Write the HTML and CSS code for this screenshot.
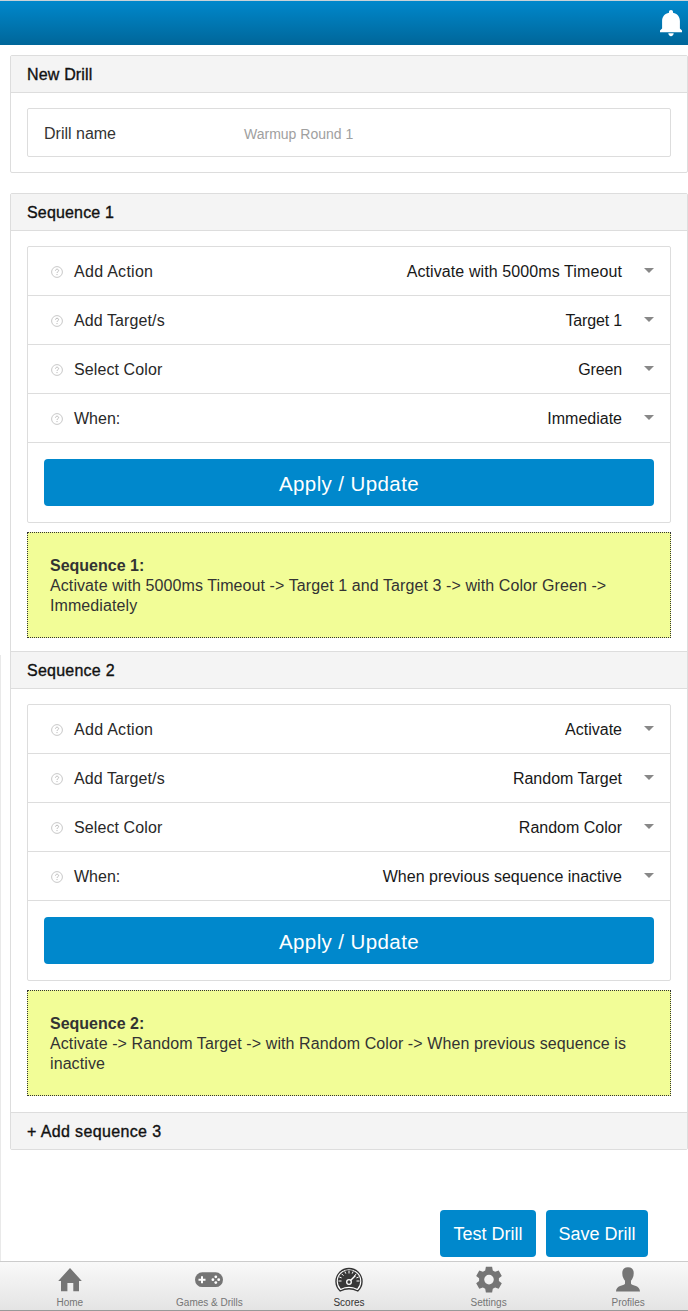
FILE: index.html
```html
<!DOCTYPE html>
<html lang="en">
<head>
<meta charset="utf-8">
<title>New Drill</title>
<link rel="stylesheet" href="styles.css">
</head>
<body>
<svg class="defs" width="0" height="0">
  <symbol id="help" viewBox="0 0 12 12"><circle cx="6" cy="6" r="5.4" fill="none" stroke="#c8c8c8"/><path d="M4.500 4.700c0-2 3.100-2 3.100 0C7.600 5.800 6 5.700 6 7M6 8v1.100" fill="none" stroke="#bdbdbd" stroke-width="1"/></symbol>
</svg>
<header class="topbar">
  <svg class="bell" viewBox="0 0 22 27"><path d="M11 0c1.300 0 2 .8 2 2v.7c4.200.8 6.900 3.900 6.900 8.200v7.500l2.100 2.200v1.600H0v-1.600l2.100-2.200v-7.500C2.100 6.600 4.800 3.500 9 2.700V2c0-1.200.7-2 2-2zM8.300 23.300h5.400c-.2 1.700-1.200 2.900-2.700 2.900s-2.500-1.200-2.700-2.900z" fill="#fff"/></svg>
</header>
<main class="content">
  <section class="panel">
    <h2 class="heading">New Drill</h2>
    <div class="body">
      <div class="field"><label class="field-label">Drill name</label><span class="placeholder">Warmup Round 1</span></div>
    </div>
  </section>
  <section class="panel">
    <h2 class="heading">Sequence 1</h2>
    <div class="body first">
      <div class="form">
        <div class="row"><svg class="help"><use href="#help"/></svg><span class="loose">Add Action</span><span class="value spaced">Activate with 5000ms Timeout</span><i class="caret"></i></div>
        <div class="row"><svg class="help"><use href="#help"/></svg><span class="spaced">Add Target/s</span><span class="value tight">Target 1</span><i class="caret"></i></div>
        <div class="row"><svg class="help"><use href="#help"/></svg><span class="spaced">Select Color</span><span class="value tight">Green</span><i class="caret"></i></div>
        <div class="row"><svg class="help"><use href="#help"/></svg><span>When:</span><span class="value">Immediate</span><i class="caret"></i></div>
        <div class="apply"><button class="btn wide">Apply / Update</button></div>
      </div>
      <div class="note"><b>Sequence 1:</b><br>Activate with 5000ms Timeout -&gt; Target 1 and Target 3 -&gt; with Color Green -&gt;<br>Immediately</div>
    </div>
    <h2 class="heading inner">Sequence 2</h2>
    <div class="body second">
      <div class="form">
        <div class="row"><svg class="help"><use href="#help"/></svg><span class="loose">Add Action</span><span class="value">Activate</span><i class="caret"></i></div>
        <div class="row"><svg class="help"><use href="#help"/></svg><span class="spaced">Add Target/s</span><span class="value">Random Target</span><i class="caret"></i></div>
        <div class="row"><svg class="help"><use href="#help"/></svg><span class="spaced">Select Color</span><span class="value">Random Color</span><i class="caret"></i></div>
        <div class="row"><svg class="help"><use href="#help"/></svg><span>When:</span><span class="value">When previous sequence inactive</span><i class="caret"></i></div>
        <div class="apply"><button class="btn wide">Apply / Update</button></div>
      </div>
      <div class="note"><b>Sequence 2:</b><br>Activate -&gt; Random Target -&gt; with Random Color -&gt; When previous sequence is<br>inactive</div>
    </div>
    <h2 class="heading last">+ Add sequence 3</h2>
  </section>
</main>
<div class="actions"><button class="btn test">Test Drill</button><button class="btn save">Save Drill</button></div>
<nav class="tabs">
  <a class="tab"><svg viewBox="0 0 28 28"><path d="M14 2 25.800 15H23v10.300h-5.700V17h-5.900v8.300H5V15H2.200z" fill="#757575"/></svg><span>Home</span></a>
  <a class="tab"><svg viewBox="0 0 28 28"><rect x="0" y="6.300" width="28" height="14.800" rx="7.400" fill="#757575"/><path d="M7 10.200v7M3.500 13.700h7" stroke="#fff" stroke-width="2"/><g fill="#fff"><circle cx="20.800" cy="10.800" r="1.400"/><circle cx="20.800" cy="16.600" r="1.400"/><circle cx="17.900" cy="13.700" r="1.400"/><circle cx="23.700" cy="13.700" r="1.400"/></g></svg><span>Games &amp; Drills</span></a>
  <a class="tab active"><svg viewBox="0 0 28 28"><path d="M5.200 25A13 13 0 1 1 22.800 25Q14 20.500 5.200 25z" fill="#fff" stroke="#333" stroke-width="1.400"/><path d="M5.800 22.800A11.200 11.200 0 1 1 22.200 22.800Q14 18.500 5.800 22.800z" fill="#383838"/><path d="M14 4.500v3M3.500 15h3M24.500 15h-3M6.500 7.700l2 2M21.500 7.700l-2 2M9.800 5.400l1 2.200M18.200 5.400l-1 2.200M4.300 11l2.300.9M23.700 11l-2.300.9" stroke="#fff" stroke-width="1"/><path d="m14 16 6.500-6.500" stroke="#fff" stroke-width="1.500"/><circle cx="14" cy="16" r="2.300" fill="#383838" stroke="#fff" stroke-width="1.300"/></svg><span>Scores</span></a>
  <a class="tab"><svg viewBox="0 0 28 28"><path fill-rule="evenodd" fill="#757575" d="M10.900.8h6.200l.7 3.700 2.300 1.300 3.600-1.300 3.100 5.400-2.900 2.400v2.600l2.900 2.400-3.100 5.400-3.600-1.300-2.300 1.300-.7 3.700h-6.200l-.7-3.700-2.300-1.300-3.600 1.300-3.100-5.400 2.900-2.400v-2.600L1.200 9.900l3.100-5.400 3.600 1.300 2.300-1.300zM14 8.800a4.800 4.800 0 1 0 0 9.600 4.800 4.800 0 0 0 0-9.600z"/></svg><span>Settings</span></a>
  <a class="tab"><svg viewBox="0 0 28 28"><path fill="#757575" d="M14 1.200c3.900 0 5.900 2.400 5.700 6.200 0 3.700-1.500 5.500-2.700 7.300v3.100c1.200 1.900 9 1.600 9 7.800H2c0-6.200 7.800-5.900 9-7.800v-3.100c-1.200-1.800-2.700-3.600-2.700-7.300C8.100 3.600 10.100 1.200 14 1.200z"/></svg><span>Profiles</span></a>
</nav>
</body>
</html>
```
FILE: styles.css
```css
* { box-sizing: border-box; }
body {
  margin: 0;
  height: 1311px;
  display: flex;
  flex-direction: column;
  font: 16px/20px "Liberation Sans", Arial, sans-serif;
  color: #282828;
  background: linear-gradient(#e9e9e9, #e9e9e9) 0 655px / 1px 100% no-repeat #fff;
  overflow: hidden;
}
.defs { position: absolute; }
.topbar {
  flex: none;
  height: 45px;
  padding: 9px 6px 0 0;
  border-top: 1px solid #c8d2d8;
  background: linear-gradient(#0088cc, #006699);
  display: flex;
  justify-content: flex-end;
  align-items: flex-start;
}
.bell { width: 22px; height: 27px; }
.content {
  padding: 10px 0 0 10px;
  display: flex;
  flex-direction: column;
  gap: 20px;
}
.panel {
  border: 1px solid #ddd;
  border-radius: 2px;
}
.heading {
  margin: 0;
  height: 37px;
  padding: 0 16px;
  border-bottom: 1px solid #ddd;
  background: #f4f4f4;
  color: #111;
  font-size: 16px;
  line-height: 37px;
  font-weight: 400;
  letter-spacing: 0.17px;
  -webkit-text-stroke: 0.35px #111;
}
.heading.inner { height: 38px; border-top: 1px solid #ddd; letter-spacing: 0.24px; }
.heading.last { height: 37px; border-top: 1px solid #ddd; border-bottom: 0; letter-spacing: 0.37px; }
.body { padding: 15px 16px; }
.body.first { padding-bottom: 13px; }
.body.second { padding-bottom: 16px; }
.field {
  height: 49px;
  border: 1px solid #ddd;
  border-radius: 2px;
  padding: 2px 16px 0;
  display: flex;
  align-items: center;
  color: #333;
}
.field-label { width: 200px; }
.placeholder { font-size: 14px; color: #a0a0a0; }
.form { border: 1px solid #ddd; border-radius: 2px; }
.row {
  height: 49px;
  padding: 1px 16px 0 23px;
  border-bottom: 1px solid #ddd;
  display: flex;
  align-items: center;
}
.help { width: 12px; height: 12px; margin-right: 11px; }
.value { margin-left: auto; color: #181818; }
.spaced { letter-spacing: 0.1px; }
.loose { letter-spacing: 0.28px; }
.tight { letter-spacing: -0.15px; }
.caret {
  margin: -2px 0 0 22px;
  border: 5px solid transparent;
  border-top-color: #888;
  border-bottom: 0;
}
.apply { padding: 16px; height: 79px; }
.btn {
  display: block;
  height: 47px;
  padding: 2px 0 0;
  border: 0;
  border-radius: 4px;
  background: #0088cc;
  color: #fff;
  font: 20px/24px "Liberation Sans", Arial, sans-serif;
}
.btn.wide { width: 100%; font-size: 20.5px; letter-spacing: 0.4px; }
.note {
  height: 106px;
  margin-top: 9px;
  padding: 23px 22px;
  border: 1px dotted #333;
  background: #f2fd97;
  color: #333;
  white-space: nowrap;
  letter-spacing: 0.09px;
}
.note b { letter-spacing: 0; }
.actions {
  flex: none;
  display: flex;
  justify-content: flex-end;
  gap: 10px;
  margin-top: auto;
  padding: 0 40px 4px 0;
}
.actions .btn { font-size: 18px; padding-top: 1px; }
.test { width: 96px; }
.save { width: 102px; }
.tabs {
  flex: none;
  height: 50px;
  border-top: 1px solid #ccc;
  border-bottom: 1px solid #999;
  background: linear-gradient(#f9f9f9, #e4e4e4);
  display: grid;
  grid-template-columns: repeat(5, 1fr);
  width: 698px;
}
.tab {
  display: flex;
  flex-direction: column;
  align-items: center;
  padding-top: 4px;
  font-size: 10px;
  line-height: 12px;
  color: #757575;
}
.tab svg { width: 28px; height: 28px; }
.tab span { margin-top: 3px; }
.tab.active { color: #333; }
```
